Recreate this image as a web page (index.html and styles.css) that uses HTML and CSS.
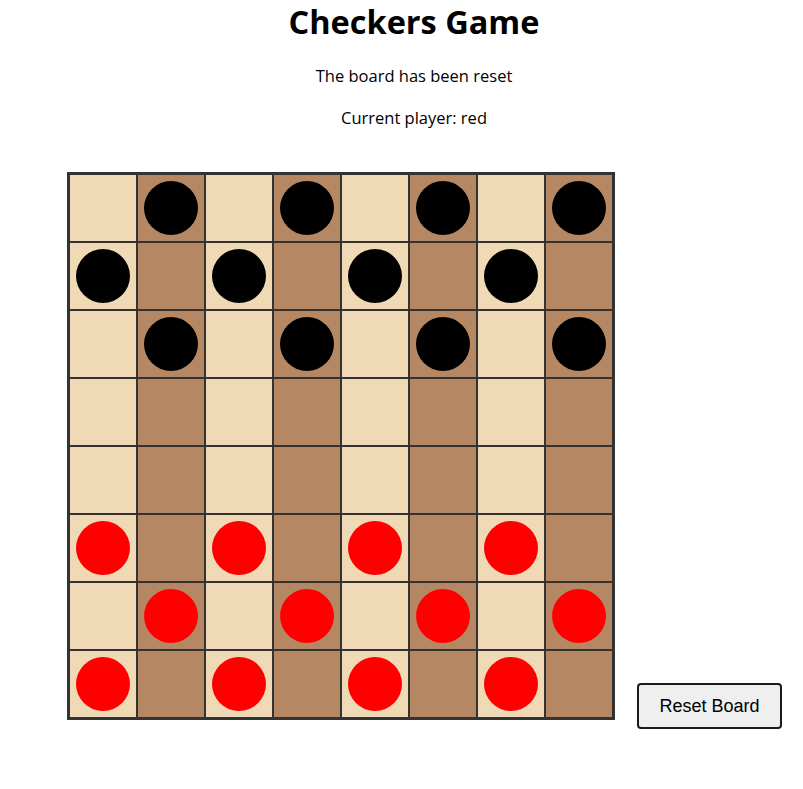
FILE: index.html
```html
<!DOCTYPE html>
<html>
<head>
<meta charset="utf-8">
<link rel="stylesheet" href="styles.css">
</head>
<body>
<div class="header">
  <h1 class="title">Checkers Game</h1>
  <p class="status first">The board has been reset</p>
  <p class="status">Current player: red</p>
</div>
<div class="game">
  <div class="board">
    <div class="cell light"></div><div class="cell dark"><span class="piece black"></span></div><div class="cell light"></div><div class="cell dark"><span class="piece black"></span></div><div class="cell light"></div><div class="cell dark"><span class="piece black"></span></div><div class="cell light"></div><div class="cell dark"><span class="piece black"></span></div>
    <div class="cell light"><span class="piece black"></span></div><div class="cell dark"></div><div class="cell light"><span class="piece black"></span></div><div class="cell dark"></div><div class="cell light"><span class="piece black"></span></div><div class="cell dark"></div><div class="cell light"><span class="piece black"></span></div><div class="cell dark"></div>
    <div class="cell light"></div><div class="cell dark"><span class="piece black"></span></div><div class="cell light"></div><div class="cell dark"><span class="piece black"></span></div><div class="cell light"></div><div class="cell dark"><span class="piece black"></span></div><div class="cell light"></div><div class="cell dark"><span class="piece black"></span></div>
    <div class="cell light"></div><div class="cell dark"></div><div class="cell light"></div><div class="cell dark"></div><div class="cell light"></div><div class="cell dark"></div><div class="cell light"></div><div class="cell dark"></div>
    <div class="cell light"></div><div class="cell dark"></div><div class="cell light"></div><div class="cell dark"></div><div class="cell light"></div><div class="cell dark"></div><div class="cell light"></div><div class="cell dark"></div>
    <div class="cell light"><span class="piece red"></span></div><div class="cell dark"></div><div class="cell light"><span class="piece red"></span></div><div class="cell dark"></div><div class="cell light"><span class="piece red"></span></div><div class="cell dark"></div><div class="cell light"><span class="piece red"></span></div><div class="cell dark"></div>
    <div class="cell light"></div><div class="cell dark"><span class="piece red"></span></div><div class="cell light"></div><div class="cell dark"><span class="piece red"></span></div><div class="cell light"></div><div class="cell dark"><span class="piece red"></span></div><div class="cell light"></div><div class="cell dark"><span class="piece red"></span></div>
    <div class="cell light"><span class="piece red"></span></div><div class="cell dark"></div><div class="cell light"><span class="piece red"></span></div><div class="cell dark"></div><div class="cell light"><span class="piece red"></span></div><div class="cell dark"></div><div class="cell light"><span class="piece red"></span></div><div class="cell dark"></div>
  </div>
  <button class="reset">Reset Board</button>
</div>
</body>
</html>
```
FILE: styles.css
```css
html, body {
  margin: 0;
  background: #ffffff;
}
body {
  font-family: "Open Sans", "Noto Sans", sans-serif;
  color: #000;
}
.header {
  padding-left: 25px;
  text-align: center;
}
.title {
  margin: 0;
  font-size: 32.5px;
  line-height: 44px;
  font-weight: 700;
}
.status {
  margin: 16px 0 0;
  font-size: 16.5px;
  line-height: 26px;
}
.status.first {
  margin-top: 19px;
}
.game {
  display: flex;
  align-items: flex-end;
  gap: 22px;
  padding-left: 67px;
  margin-top: 41px;
}
.board {
  display: grid;
  grid-template-columns: repeat(8, 68px);
  grid-template-rows: repeat(8, 68px);
  border: 2px solid #333;
  margin-bottom: 9px;
}
.cell {
  box-sizing: border-box;
  border: 1px solid #333;
  display: flex;
  align-items: center;
  justify-content: center;
}
.light { background: #f0d9b5; }
.dark { background: #b58863; }
.piece {
  width: 54px;
  height: 54px;
  border-radius: 50%;
}
.piece.black { background: #000; }
.piece.red { background: #ff0000; }
.reset {
  width: 145px;
  height: 46px;
  border: 2px solid #1a1a1a;
  border-radius: 4px;
  background: #efefef;
  font-family: "Liberation Sans", Arial, sans-serif;
  font-size: 18px;
  color: #000;
  padding: 0;
}
```
